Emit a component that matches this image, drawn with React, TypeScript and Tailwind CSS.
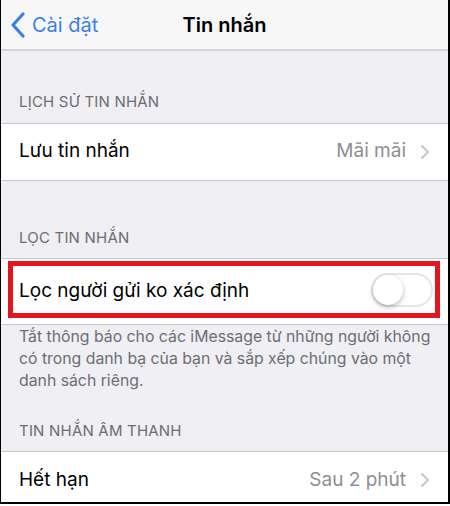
import React from 'react';

const font = { fontFamily: 'Inter, "Noto Sans", sans-serif' };

function Chevron() {
  return (
    <svg width="10" height="16" viewBox="0 0 10 16" className="ml-[14px]">
      <path d="M2 2 L8 8 L2 14" fill="none" stroke="#c4c4c9" strokeWidth="2" strokeLinecap="round" strokeLinejoin="round" />
    </svg>
  );
}

function Header({ children, pt, pb = 'pb-[9px]' }: { children: React.ReactNode; pt: string; pb?: string }) {
  return (
    <div className={`${pt} ${pb} px-[18px] text-[15px] text-[#6d6d72] tracking-[0.2px]`}>{children}</div>
  );
}

export default function App() {
  return (
    <div className="w-[450px] h-[506px] bg-white overflow-hidden" style={font}>
      <div className="h-[504px] border-l border-r-2 border-b-2 border-black bg-[#efeff4] flex flex-col overflow-hidden">
        {/* Nav bar */}
        <div className="h-[51px] shrink-0 bg-[#f7f7f7] border-b-2 border-[#d6d6da] relative flex items-center">
          <div className="flex items-center pl-[9px] text-[#3b7fe6] text-[20px]">
            <svg width="16" height="26" viewBox="0 0 16 26" className="mr-[6px]">
              <path d="M13 2 L3 13 L13 24" fill="none" stroke="#3b7fe6" strokeWidth="3.2" strokeLinecap="round" strokeLinejoin="round" />
            </svg>
            <span>Cài đặt</span>
          </div>
          <div className="absolute inset-x-0 top-0 h-full flex items-center justify-center pointer-events-none">
            <span className="text-[20px] font-semibold text-black">Tin nhắn</span>
          </div>
        </div>

        <Header pt="pt-[40px]">LỊCH SỬ TIN NHẮN</Header>
        <div className="h-[58px] shrink-0 bg-white border-y border-[#c8c7cc] flex items-center px-[18px]">
          <span className="flex-1 text-[19px] text-black">Lưu tin nhắn</span>
          <span className="text-[19px] text-[#8e8e93]">Mãi mãi</span>
          <Chevron />
        </div>

        <Header pt="pt-[46px]">LỌC TIN NHẮN</Header>
        <div className="h-[67px] shrink-0 bg-white border-y border-[#c8c7cc] flex items-center px-[18px] relative">
          <div className="absolute left-[7px] right-[8px] top-[2px] bottom-[6px] border-[5px] border-[#e3161f]" />
          <span className="flex-1 text-[19px] text-black">Lọc người gửi ko xác định</span>
          <div className="w-[62px] h-[34px] rounded-full border-2 border-[#e5e5ea] bg-white relative mr-[-3px] mt-[-3px]">
            <div className="absolute left-0 top-0 w-[30px] h-[30px] rounded-full bg-white shadow-[0_2px_5px_rgba(0,0,0,0.28)]" />
          </div>
        </div>

        <div className="pl-[18px] pr-[11px] pt-[1px] text-[15.8px] leading-[22px] text-[#6d6d72]">
          Tắt thông báo cho các iMessage từ những người không có trong danh bạ của bạn và sắp xếp chúng vào một danh sách riêng.
        </div>

        <Header pt="pt-[28px]" pb="pb-[8px]">TIN NHẮN ÂM THANH</Header>
        <div className="h-[58px] shrink-0 bg-white border-t border-[#c8c7cc] flex items-center px-[18px]">
          <span className="flex-1 text-[19px] text-black">Hết hạn</span>
          <span className="text-[19px] text-[#8e8e93]">Sau 2 phút</span>
          <Chevron />
        </div>
      </div>
    </div>
  );
}
